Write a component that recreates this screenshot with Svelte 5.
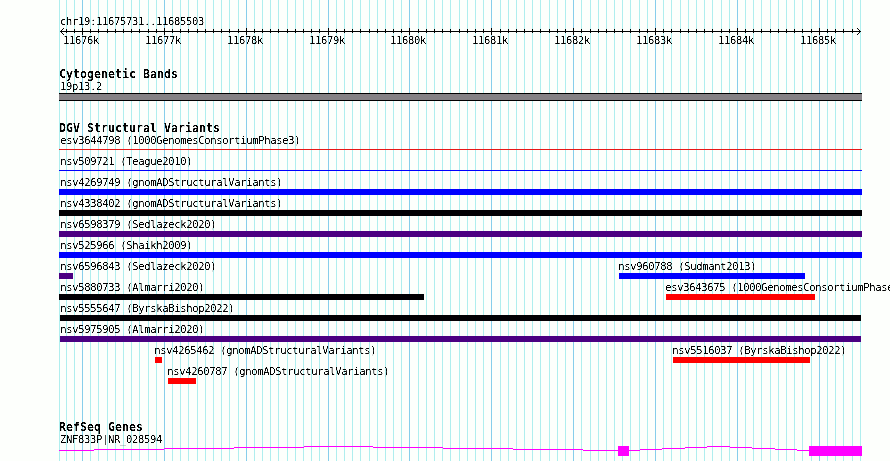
<script>
  const LEFT = 59;
  const kb = (n) => 82.02 + n * 81.86;

  const grid = [{ x: LEFT, major: false }];
  for (let i = -2; i <= 95; i++) {
    grid.push({ x: Math.round(kb(i / 10)), major: i % 10 === 0 });
  }
  const ticks = grid.slice(1, -1);
  const majors = Array.from({ length: 10 }, (_, i) => ({
    x: Math.round(kb(i)),
    text: `${11676 + i}k`
  }));

  const blue = '#0000ff';
  const black = '#020004';
  const purple = '#4b0082';
  const red = '#ff0000';

  const rows = [
    [{ name: 'esv3644798 (1000GenomesConsortiumPhase3)', from: 59, to: 862, color: '#e61717', thin: true }],
    [{ name: 'nsv509721 (Teague2010)', from: 59, to: 862, color: blue, thin: true }],
    [{ name: 'nsv4269749 (gnomADStructuralVariants)', from: 59, to: 862, color: blue }],
    [{ name: 'nsv4338402 (gnomADStructuralVariants)', from: 59, to: 862, color: black }],
    [{ name: 'nsv6598379 (Sedlazeck2020)', from: 59, to: 862, color: purple }],
    [{ name: 'nsv525966 (Shaikh2009)', from: 59, to: 862, color: blue }],
    [
      { name: 'nsv6596843 (Sedlazeck2020)', from: 59, to: 73, color: purple },
      { name: 'nsv960788 (Sudmant2013)', from: 619, to: 805, color: blue }
    ],
    [
      { name: 'nsv5880733 (Almarri2020)', from: 59, to: 424, color: black },
      { name: 'esv3643675 (1000GenomesConsortiumPhase3)', from: 666, to: 815, color: red }
    ],
    [{ name: 'nsv5555647 (ByrskaBishop2022)', from: 60, to: 861, color: black }],
    [{ name: 'nsv5975905 (Almarri2020)', from: 60, to: 861, color: purple }],
    [
      { name: 'nsv4265462 (gnomADStructuralVariants)', from: 155, to: 162, color: red },
      { name: 'nsv5516037 (ByrskaBishop2022)', from: 673, to: 810, color: red }
    ],
    [{ name: 'nsv4260787 (gnomADStructuralVariants)', from: 168, to: 196, color: red }]
  ];

  // Each feature starts where the previous one on its row ends.
  const placed = rows.map((row) =>
    row.map((f, i) => ({
      ...f,
      gap: f.from - (i ? row[i - 1].to : LEFT),
      nudge: f.from === 59 ? 1.3 : f.from === 60 ? 0.3 : -0.7
    }))
  );

  // Intron line as stepped segments: [from, to, y]
  const intron = [
    [59, 94, 5], [94, 164, 4], [164, 234, 3], [234, 304, 2], [304, 373, 1],
    [373, 443, 2], [443, 513, 3], [513, 583, 4], [583, 618, 5],
    [629, 640, 5], [640, 662, 4], [662, 685, 3], [685, 707, 2], [707, 730, 1],
    [730, 752, 2], [752, 775, 3], [775, 797, 4], [797, 809, 5]
  ];
  const exons = [[618, 629], [809, 862]];
</script>

<div class="browser">
  <svg class="grid" width="890" height="461" shape-rendering="crispEdges" aria-hidden="true">
    <filter id="crisp" x="-10%" y="-30%" width="120%" height="160%" color-interpolation-filters="sRGB">
      <feComponentTransfer><feFuncA type="linear" slope="3" intercept="-1.05" /></feComponentTransfer>
    </filter>
    {#each grid as g}
      <rect x={g.x} y="0" width="1" height="461" fill={g.major ? '#87ceeb' : '#afeeee'} />
    {/each}
  </svg>

  <main>
    <header>
      <div class="label region">chr19:11675731..11685503</div>
      <svg class="axis" width="890" height="7" shape-rendering="crispEdges" aria-hidden="true">
        <rect x="60" y="3" width="801" height="1" />
        {#each ticks as t}
          <rect x={t.x} y={t.major ? 0 : 1} width="1" height={t.major ? 7 : 4} />
        {/each}
        <path d="M61 2h1v1h-1zM62 1h1v1h-1zM63 0h1v1h-1zM61 4h1v1h-1zM62 5h1v1h-1zM63 6h1v1h-1z" />
        <path d="M859 2h1v1h-1zM858 1h1v1h-1zM857 0h1v1h-1zM859 4h1v1h-1zM858 5h1v1h-1zM857 6h1v1h-1z" />
      </svg>
      <div class="scale label">
        {#each majors as m, i}
          <span style="margin-left: {i ? m.x - majors[i - 1].x - 36 : m.x - 19}px">{m.text}</span>
        {/each}
      </div>
    </header>

    <section class="bands">
      <h2>Cytogenetic Bands</h2>
      <div class="label">19p13.2</div>
      <div class="band"></div>
    </section>

    <section class="variants">
      <h2>DGV Structural Variants</h2>
      {#each placed as row}
        <div class="row">
          {#each row as f}
            <div class="feature" style="width: {f.to - f.from}px; margin-left: {f.gap}px">
              <div class="label" style="margin-left: {f.nudge}px">{f.name}</div>
              <div class="bar" class:thin={f.thin} style="background: {f.color}"></div>
            </div>
          {/each}
        </div>
      {/each}
    </section>

    <section class="genes">
      <h2>RefSeq Genes</h2>
      <div class="label">ZNF833P|NR_028594</div>
      <svg class="gene" width="890" height="11" fill="#ff00ff" shape-rendering="crispEdges" aria-hidden="true">
        {#each intron as [a, b, y]}
          <rect x={a} {y} width={b - a} height="1" />
        {/each}
        {#each exons as [a, b]}
          <rect x={a} y="1" width={b - a} height="10" />
        {/each}
      </svg>
    </section>
  </main>
</div>

<style>
  :global(body) { margin: 0; background: #fdfffc; }
  .browser {
    position: relative;
    width: 890px;
    height: 461px;
    overflow: hidden;
    background: #fdfffc;
    color: #000;
    font-family: "DejaVu Sans Mono", "Liberation Mono", monospace;
  }
  .grid { position: absolute; inset: 0; }
  main { position: relative; display: flex; flex-direction: column; }
  svg { display: block; }
  .label {
    height: 12px;
    font-size: 10.5px;
    line-height: 12px;
    letter-spacing: -0.3215px;
    white-space: pre;
    filter: url(#crisp);
  }
  .feature .label { width: max-content; }
  h2 {
    width: max-content;
    height: 13px;
    margin: 0 0 0 59px;
    font-size: 11.6px;
    line-height: 15px;
    letter-spacing: 0.016px;
    font-weight: 700;
    filter: url(#crisp);
  }
  header { height: 67px; padding-top: 15px; box-sizing: border-box; }
  .region { padding-left: 60px; }
  .axis { margin-top: 1px; }
  .scale { display: flex; margin-top: -1px; }
  .scale span { flex: none; width: 36px; }
  .bands { height: 54px; }
  .bands > .label, .genes > .label { margin-left: 60px; }
  .band {
    box-sizing: border-box;
    width: 803px;
    height: 8px;
    margin: 1px 0 0 59px;
    background: #858185;
    border: solid #000;
    border-width: 1px 0;
  }
  .variants { height: 299px; }
  .row { display: flex; height: 21px; padding-left: 59px; }
  .feature { flex: none; }
  .bar { height: 6px; margin-top: 1px; }
  .thin { height: 1px; margin-top: 3px; }
</style>
